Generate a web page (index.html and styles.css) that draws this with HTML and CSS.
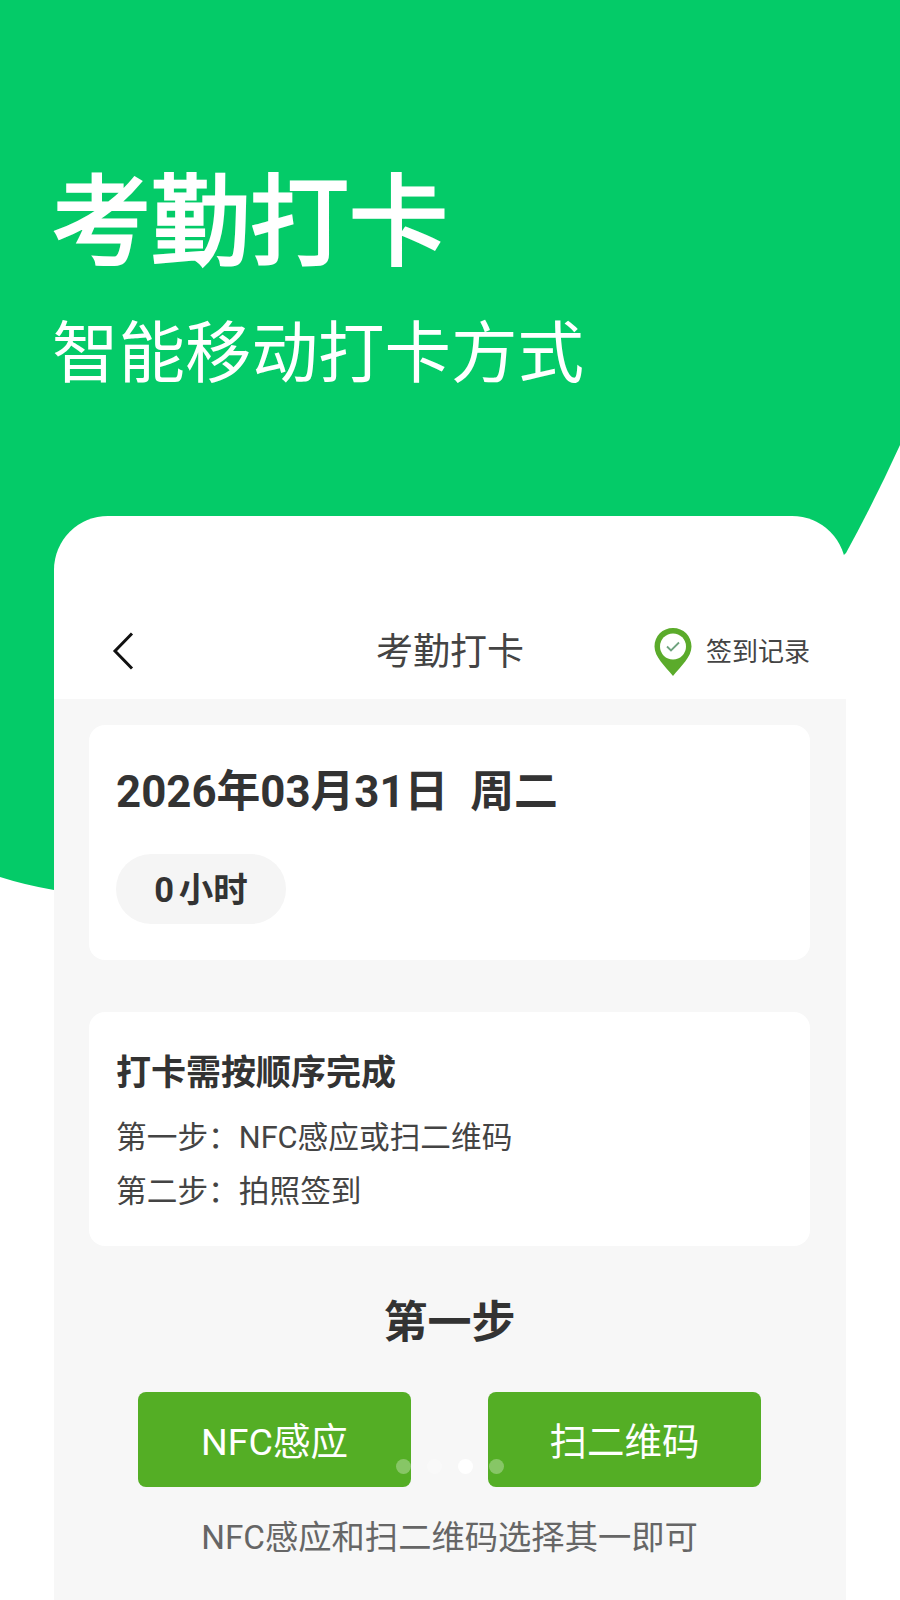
FILE: index.html
```html
<!DOCTYPE html>
<html>
<head>
    <meta charset="utf-8">
    <title>考勤打卡</title>
    <link rel="stylesheet" href="styles.css">
</head>
<body>
    <!-- Green backdrop -->
    <svg class="backdrop" width="900" height="900" viewBox="0 0 900 900">
        <path d="M0 0H900V445Q875 500 846 553L500 880L54 890Q25 885 0 877Z" fill="#04cb68"/>
    </svg>

    <div class="hero">
        <h1>考勤打卡</h1>
        <p>智能移动打卡方式</p>
    </div>

    <div class="phone">
        <div class="topbar">
            <svg class="back" width="24" height="38" viewBox="0 0 24 38">
                <path d="M20 1.500L3 19L20 36.500" fill="none" stroke="#111" stroke-width="3"/>
            </svg>
            <div class="topbar-title">考勤打卡</div>
            <div class="records">
                <svg width="38" height="48" viewBox="0 0 38 48">
                    <path d="M19 0C8.500 0 0.500 8 0.500 18.500C0.500 29 11 38 19 48C27 38 37.500 29 37.500 18.500C37.500 8 29.500 0 19 0Z" fill="#5bab2b"/>
                    <circle cx="19" cy="18.500" r="13" fill="#fff"/>
                    <path d="M13 18.500L17 22.500L25 14.500" fill="none" stroke="#6fa37f" stroke-width="1.800"/>
                </svg>
                <span>签到记录</span>
            </div>
        </div>

        <div class="content">
            <div class="card card-date">
                <div class="date">2026年03月31日&nbsp;&nbsp;周二</div>
                <div class="hours">0 小时</div>
            </div>

            <div class="card card-steps">
                <div class="steps-title">打卡需按顺序完成</div>
                <div class="step">第一步：NFC感应或扫二维码</div>
                <div class="step">第二步：拍照签到</div>
            </div>

            <div class="step-name">第一步</div>

            <div class="actions">
                <div class="action">NFC感应</div>
                <div class="action">扫二维码</div>
            </div>

            <div class="note">NFC感应和扫二维码选择其一即可</div>
        </div>
    </div>

    <!-- Pager dots over the page -->
    <div class="dots">
        <span class="dot dot-dim"></span>
        <span class="dot dot-faint"></span>
        <span class="dot dot-on"></span>
        <span class="dot dot-dim"></span>
    </div>
</body>
</html>
```

FILE: styles.css
```css
body {
    font-family: Roboto, "Noto Sans CJK SC", sans-serif;
    margin: 0;
    width: 900px;
    height: 1600px;
    overflow: hidden;
    position: relative;
    background-color: #fff;
    color: #333;
}
.backdrop {
    position: absolute;
    top: 0;
    left: 0;
}
.hero {
    position: relative;
    height: 516px;
    box-sizing: border-box;
    padding: 163px 0 0 52px;
    color: #fff;
}
.hero h1 {
    margin: 0;
    font-size: 99px;
    line-height: 120px;
    font-weight: 400;
    -webkit-text-stroke: 3px #fff; /* reference sits between regular and bold */
}
.hero p {
    margin: 31px 0 0;
    font-size: 66.500px;
    line-height: 80px;
    font-weight: 400;
}
.phone {
    position: relative;
    margin: 0 54px;
    height: 1084px;
    background-color: #fff;
    border-radius: 54px 54px 0 0;
    display: flex;
    flex-direction: column;
}
.topbar {
    height: 183px;
    flex-shrink: 0;
    box-sizing: border-box;
    padding: 100px 36px 0 58px;
    display: grid;
    grid-template-columns: 1fr auto 1fr;
    align-items: start;
}
.back {
    margin-top: 16px;
}
.topbar-title {
    font-size: 37px;
    line-height: 74px;
    color: #444;
    transform: translateX(-11px);
}
.records {
    display: flex;
    align-items: center;
    justify-content: flex-end;
    gap: 14px;
    font-size: 26px;
    line-height: 72px;
    color: #444;
}
.content {
    flex: 1;
    background-color: #f7f7f7;
    padding: 26px 36px 0 35px;
}
.card {
    background-color: #fff;
    border-radius: 16px;
    box-sizing: border-box;
    padding-left: 27px;
}
.card-date {
    height: 235px;
    padding-top: 37px;
}
.date {
    font-size: 43.800px;
    line-height: 60px;
    font-weight: 700;
}
.hours {
    margin-top: 32px;
    width: 170px;
    height: 70px;
    border-radius: 35px;
    background-color: #f5f5f5;
    font-size: 34.500px;
    line-height: 72px;
    font-weight: 700;
    word-spacing: -4px;
    text-align: center;
}
.card-steps {
    margin-top: 52px;
    height: 234px;
    padding-top: 37px;
}
.steps-title {
    font-size: 35px;
    line-height: 50px;
    font-weight: 700;
    margin-bottom: 12px;
}
.step {
    font-size: 30.700px;
    line-height: 54px;
    color: #444;
}
.step-name {
    margin-top: 47px;
    font-size: 44px;
    line-height: 60px;
    font-weight: 700;
    text-align: center;
}
.actions {
    margin-top: 39px;
    display: flex;
    justify-content: center;
    gap: 77px;
}
.action {
    width: 273px;
    height: 95px;
    border-radius: 8px;
    background-color: #54ae25;
    color: #fff;
    font-size: 37.500px;
    line-height: 100px;
    text-align: center;
}
.note {
    margin-top: 28px;
    font-size: 33.300px;
    line-height: 46px;
    text-align: center;
    color: #666;
}
.dots {
    position: absolute;
    top: 1459px;
    left: 396px;
    display: flex;
    gap: 16px;
}
.dot {
    width: 15px;
    height: 15px;
    border-radius: 50%;
}
.dot-dim { background-color: rgba(255, 255, 255, 0.3); }
.dot-faint { background-color: rgba(255, 255, 255, 0.3); }
.dot-on { background-color: #fff; }
```
